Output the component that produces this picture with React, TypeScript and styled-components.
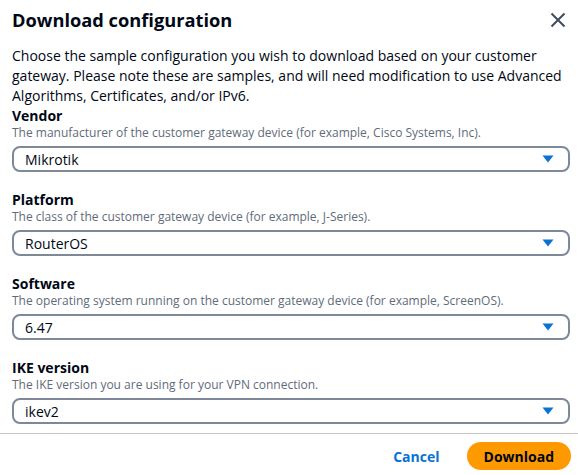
import React from "react";
import styled, { createGlobalStyle } from "styled-components";

const Global = createGlobalStyle`
  html, body { margin: 0; padding: 0; background: #ffffff; }
  body { font-family: "Open Sans", "Noto Sans", Arial, sans-serif; color: #000716; }
  * { box-sizing: border-box; }
`;

const Modal = styled.div`
  width: 578px;
  height: 475px;
  display: flex;
  flex-direction: column;
  background: #ffffff;
  overflow: hidden;
`;

const Header = styled.div`
  display: flex;
  align-items: center;
  justify-content: space-between;
  padding: 8px 10px 0 12px;
`;

const Title = styled.h2`
  margin: 0;
  font-size: 18.25px;
  line-height: 24px;
  font-weight: 700;
  color: #000716;
`;

const CloseButton = styled.button`
  border: 0;
  background: transparent;
  padding: 0;
  width: 20px;
  height: 20px;
  display: flex;
  align-items: center;
  justify-content: center;
  color: #414d5c;
  cursor: pointer;
`;

const Body = styled.div`
  padding: 14px 8px 0 12px;
  display: flex;
  flex-direction: column;
`;

const Intro = styled.p`
  margin: 0 0 1px;
  font-size: 14px;
  line-height: 20px;
  color: #000716;
`;

const FieldList = styled.div`
  display: flex;
  flex-direction: column;
  gap: 19px;
`;

const Field = styled.div`
  display: flex;
  flex-direction: column;
`;

const Label = styled.label`
  font-size: 14px;
  line-height: 18px;
  font-weight: 700;
  color: #000716;
`;

const Hint = styled.div`
  font-size: 12px;
  line-height: 16px;
  color: #5f6b7a;
`;

const Select = styled.div`
  margin-top: 5px;
  height: 26px;
  border: 2px solid #7d8998;
  border-radius: 8px;
  display: flex;
  align-items: center;
  justify-content: space-between;
  padding: 0 14px 0 11px;
  font-size: 14px;
  color: #000716;
`;

const Divider = styled.hr`
  margin: 9px 0 0;
  border: 0;
  border-top: 1px solid #c6c6cd;
`;

const Footer = styled.div`
  display: flex;
  justify-content: flex-end;
  align-items: center;
  gap: 27px;
  padding: 8px 7px 0 0;
`;

const LinkButton = styled.button`
  border: 0;
  background: transparent;
  padding: 0;
  font-family: inherit;
  font-size: 14px;
  font-weight: 700;
  color: #0972d3;
  cursor: pointer;
`;

const PrimaryButton = styled.button`
  border: 0;
  height: 28px;
  padding: 0 17px;
  border-radius: 20px;
  background: #ff9900;
  font-family: inherit;
  font-size: 14px;
  font-weight: 700;
  color: #000716;
  cursor: pointer;
`;

const Caret = () => (
  <svg width="12" height="8" viewBox="0 0 12 8">
    <path d="M0.5 0.5 H11.5 L6 7.5 Z" fill="#0972d3" />
  </svg>
);

const fields = [
  {
    label: "Vendor",
    hint: "The manufacturer of the customer gateway device (for example, Cisco Systems, Inc).",
    value: "Mikrotik",
  },
  {
    label: "Platform",
    hint: "The class of the customer gateway device (for example, J-Series).",
    value: "RouterOS",
  },
  {
    label: "Software",
    hint: "The operating system running on the customer gateway device (for example, ScreenOS).",
    value: "6.47",
  },
  {
    label: "IKE version",
    hint: "The IKE version you are using for your VPN connection.",
    value: "ikev2",
  },
];

export default function App() {
  return (
    <>
      <Global />
      <Modal>
        <Header>
          <Title>Download configuration</Title>
          <CloseButton aria-label="Close">
            <svg width="16" height="16" viewBox="0 0 16 16">
              <path d="M1.5 1.5 L14.5 14.5 M14.5 1.5 L1.5 14.5" stroke="currentColor" strokeWidth="2" fill="none" />
            </svg>
          </CloseButton>
        </Header>
        <Body>
          <Intro>
            Choose the sample configuration you wish to download based on your customer gateway. Please note these are
            samples, and will need modification to use Advanced Algorithms, Certificates, and/or IPv6.
          </Intro>
          <FieldList>
            {fields.map((f) => (
              <Field key={f.label}>
                <Label>{f.label}</Label>
                <Hint>{f.hint}</Hint>
                <Select>
                  <span>{f.value}</span>
                  <Caret />
                </Select>
              </Field>
            ))}
          </FieldList>
        </Body>
        <Divider />
        <Footer>
          <LinkButton>Cancel</LinkButton>
          <PrimaryButton>Download</PrimaryButton>
        </Footer>
      </Modal>
    </>
  );
}
